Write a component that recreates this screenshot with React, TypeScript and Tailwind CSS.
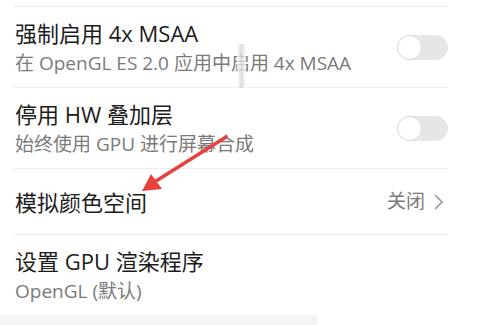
const font = { fontFamily: '"Open Sans", "Noto Sans CJK SC", sans-serif' };

function Toggle() {
  return (
    <div className="relative w-[51px] h-[25px] rounded-full bg-[#e6e6e6]">
      <div className="absolute left-0 top-0 w-[25px] h-[25px] rounded-full bg-white border border-[#dcdcdc]" />
    </div>
  );
}

function Row({
  title,
  sub,
  right,
  tall = true,
}: {
  title: string;
  sub?: string;
  right?: React.ReactNode;
  tall?: boolean;
}) {
  return (
    <div
      className={`flex items-center justify-between border-b border-[#ececec] ${
        tall ? "h-[81px]" : "h-[66px]"
      }`}
    >
      <div className="flex flex-col pl-[2px]">
        <div className="text-[22px] leading-[28px] text-[#1c1c1c]">{title}</div>
        {sub && (
          <div className="mt-[4px] text-[19px] leading-[24px] text-[#7a7a7a]">{sub}</div>
        )}
      </div>
      {right}
    </div>
  );
}

export default function App() {
  return (
    <div className="relative w-[484px] h-[325px] overflow-hidden bg-white" style={font}>
      <div className="pt-[6px] ml-[13px] w-[435px]">
        <div className="border-t border-[#ececec]" />
        <Row title="强制启用 4x MSAA" sub="在 OpenGL ES 2.0 应用中启用 4x MSAA" right={<Toggle />} />
        <Row title="停用 HW 叠加层" sub="始终使用 GPU 进行屏幕合成" right={<Toggle />} />
        <Row
          title="模拟颜色空间"
          tall={false}
          right={
            <div className="flex items-center gap-[9px] pr-[5px] text-[19px] text-[#7a7a7a]">
              <span>关闭</span>
              <svg width="9" height="16" viewBox="0 0 9 16">
                <path d="M1 1l7 7-7 7" fill="none" stroke="#9a9a9a" strokeWidth="1.6" />
              </svg>
            </div>
          }
        />
        <div className="flex h-[80px] flex-col pl-[2px] pt-[12px]">
          <div className="text-[22px] leading-[28px] text-[#1c1c1c]">设置 GPU 渲染程序</div>
          <div className="mt-[4px] text-[19px] leading-[24px] text-[#7a7a7a]">OpenGL (默认)</div>
        </div>
      </div>
      <div className="w-[317px] h-[10px] bg-[#f4f4f4]" />

      {/* scan artifact */}
      <div className="absolute left-[237px] top-[44px] w-[9px] h-[44px] bg-gradient-to-r from-white via-[#d4d4d4] to-white opacity-80" />

      {/* annotation arrow */}
      <svg className="absolute left-0 top-0" width="484" height="325" viewBox="0 0 484 325">
        <line x1="226" y1="137" x2="156" y2="181" stroke="#e8403f" strokeWidth="3.5" strokeLinecap="round" />
        <polygon points="142,191 151,174 162,189" fill="#e8403f" />
      </svg>
    </div>
  );
}
